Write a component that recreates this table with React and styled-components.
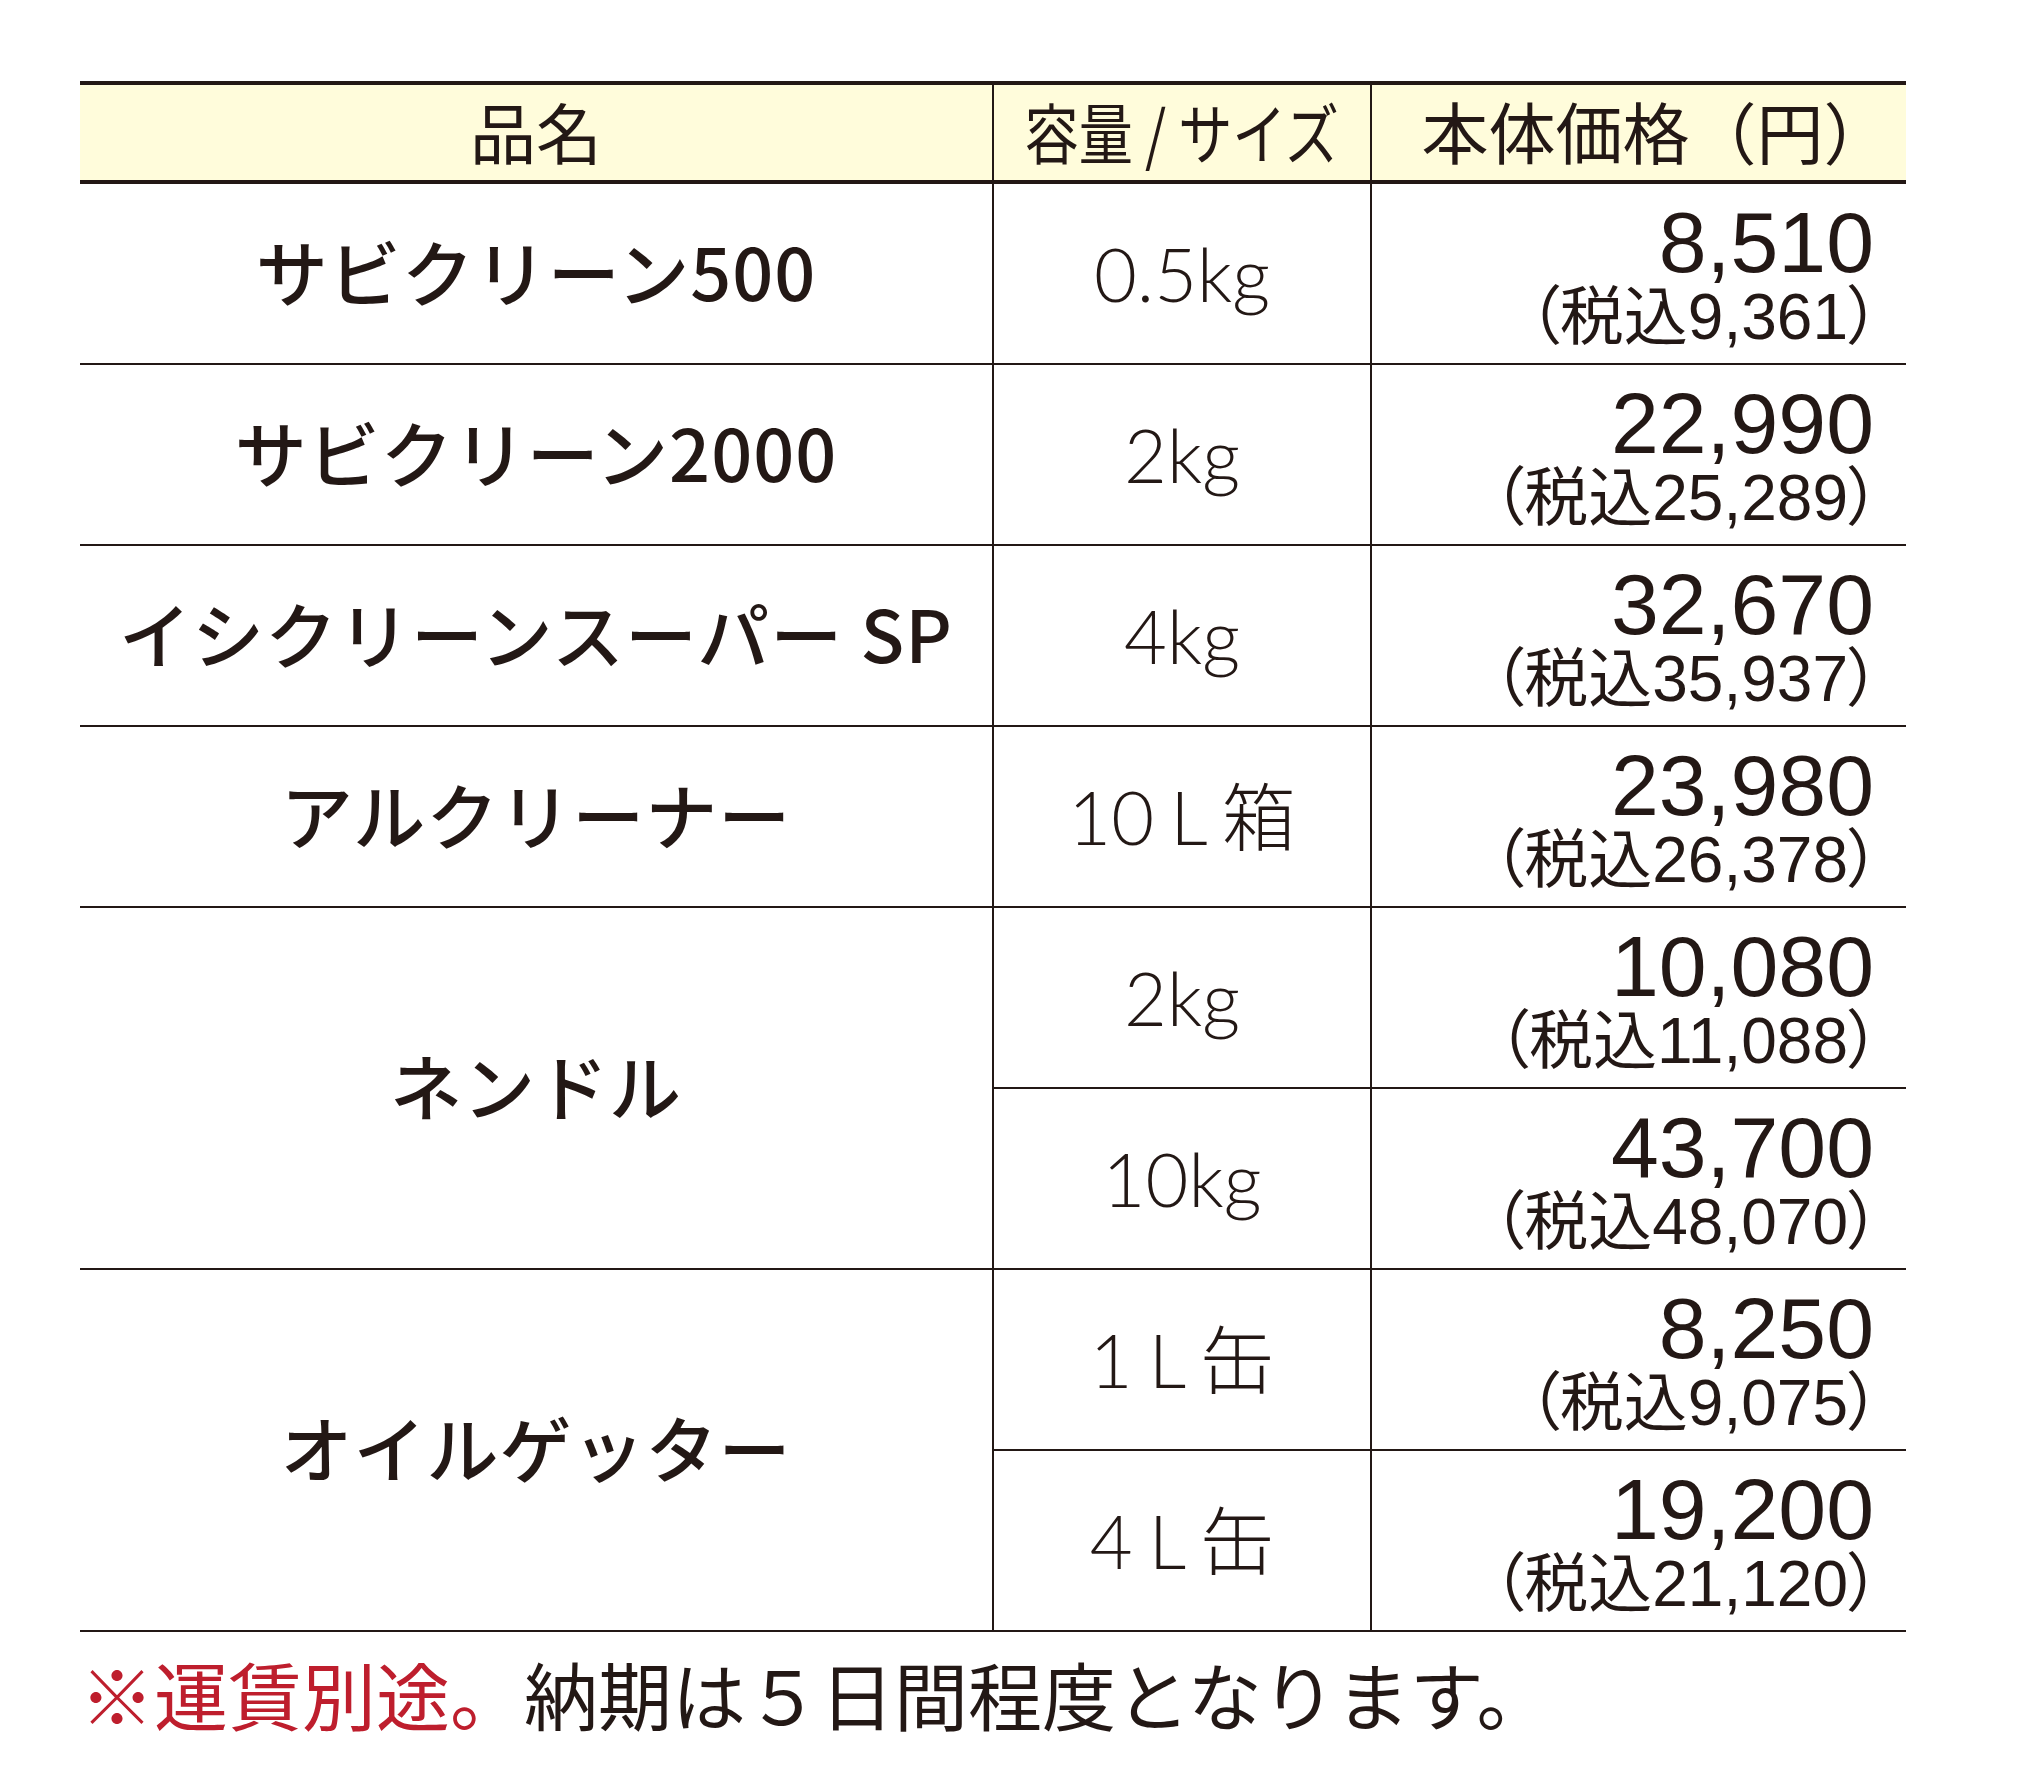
import React from "react";
import styled, { createGlobalStyle } from "styled-components";

const INK = "#231815";
const JP = `"Noto Sans CJK JP", "Noto Sans", sans-serif`;

const GlobalStyle = createGlobalStyle`
  html, body { margin: 0; padding: 0; background: #ffffff; }
  body { font-family: ${JP}; color: ${INK}; }
`;

const Page = styled.main`
  width: 2026px;
  min-height: 1786px;
  box-sizing: border-box;
  padding: 81px 0 0 80px;
`;

const PriceTable = styled.div`
  display: grid;
  width: 1826px;
  grid-template-columns: 912px 378px 536px;
  grid-template-rows: 103px;
  grid-auto-rows: 181px;
`;

const HeadCell = styled.div`
  display: flex;
  align-items: center;
  justify-content: center;
  box-sizing: border-box;
  padding: 0 0 6px ${(p) => p.$shift || 0}px;
  background: #fffcdb;
  border-top: 4px solid ${INK};
  border-bottom: 4px solid ${INK};
  border-left: ${(p) => (p.$divider ? `2px solid ${INK}` : "none")};
  font-size: ${(p) => p.$size || 66}px;
  line-height: 1;
  font-weight: 400;
  white-space: nowrap;
`;

const Squeeze = styled.span`
  display: inline-block;
  transform: scaleX(${(p) => p.$ratio || 1});
`;

const Cell = styled.div`
  display: flex;
  box-sizing: border-box;
  border-bottom: 2px solid ${INK};
  border-left: ${(p) => (p.$divider ? `2px solid ${INK}` : "none")};
  grid-row: span ${(p) => p.$span || 1};
  white-space: nowrap;
`;

const NameCell = styled(Cell)`
  align-items: center;
  justify-content: center;
  padding-bottom: 8px;
  font-size: 72px;
  font-weight: 500;
  letter-spacing: 1px;
  line-height: 1;
`;

const SizeCell = styled(Cell)`
  align-items: center;
  justify-content: center;
  font-family: Lato, "Noto Sans CJK JP", sans-serif;
  font-weight: 300;
  font-size: 74px;
  word-spacing: -4px;
  line-height: 1;
`;

const PriceCell = styled(Cell)`
  flex-direction: column;
  align-items: flex-end;
  justify-content: flex-start;
  padding: 15px 32px 0 0;
`;

const Price = styled.div`
  font-family: "Liberation Sans", Arial, sans-serif;
  font-size: 86px;
  line-height: 86px;
  height: 86px;
`;

const Tax = styled.div`
  margin-right: -6px;
  font-family: "Liberation Sans", "Noto Sans CJK JP", sans-serif;
  font-size: 64px;
  line-height: 64px;
  font-feature-settings: "palt";
`;

const Note = styled.p`
  margin: 24px 0 0 0;
  font-size: 74px;
  line-height: 1;
  white-space: nowrap;
`;

const Alert = styled.span`
  color: #be1e2d;
`;

const products = [
  { name: "サビクリーン500", items: [{ size: "0.5kg", price: "8,510", tax: "9,361" }] },
  { name: "サビクリーン2000", items: [{ size: "2kg", price: "22,990", tax: "25,289" }] },
  { name: "イシクリーンスーパー SP", items: [{ size: "4kg", price: "32,670", tax: "35,937" }] },
  { name: "アルクリーナー", items: [{ size: "10 L 箱", price: "23,980", tax: "26,378" }] },
  {
    name: "ネンドル",
    items: [
      { size: "2kg", price: "10,080", tax: "11,088" },
      { size: "10kg", price: "43,700", tax: "48,070" },
    ],
  },
  {
    name: "オイルゲッター",
    items: [
      { size: "1 L 缶", price: "8,250", tax: "9,075" },
      { size: "4 L 缶", price: "19,200", tax: "21,120" },
    ],
  },
];

export default function App() {
  return (
    <>
      <GlobalStyle />
      <Page>
        <PriceTable>
          <HeadCell>品名</HeadCell>
          <HeadCell $divider>
            <Squeeze $ratio={0.82}>容量 / サイズ</Squeeze>
          </HeadCell>
          <HeadCell $divider $shift={34} $size={67}>
            本体価格（円）
          </HeadCell>
          {products.map((p) => (
            <React.Fragment key={p.name}>
              <NameCell $span={p.items.length}>{p.name}</NameCell>
              {p.items.map((it) => (
                <React.Fragment key={it.size + it.price}>
                  <SizeCell $divider>{it.size}</SizeCell>
                  <PriceCell $divider>
                    <Price>{it.price}</Price>
                    <Tax>（税込{it.tax}）</Tax>
                  </PriceCell>
                </React.Fragment>
              ))}
            </React.Fragment>
          ))}
        </PriceTable>
        <Note>
          <Alert>※運賃別途。</Alert>納期は５日間程度となります。
        </Note>
      </Page>
    </>
  );
}
